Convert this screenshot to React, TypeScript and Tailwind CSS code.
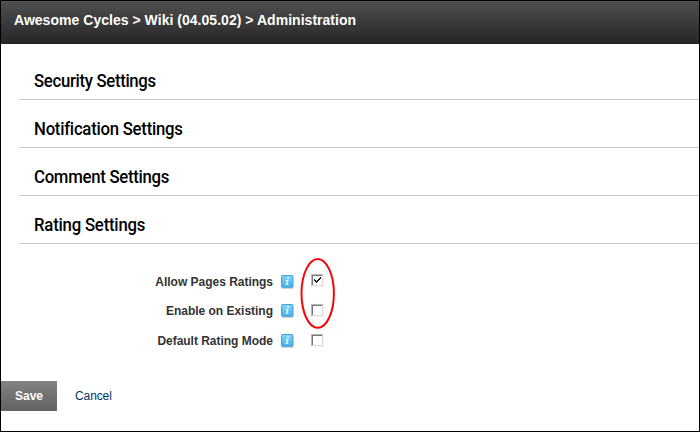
const sections = [
  { title: 'Security Settings', spacing: 'tracking-[-0.34px]' },
  { title: 'Notification Settings', spacing: 'tracking-[-0.27px]' },
  { title: 'Comment Settings', spacing: 'tracking-[-0.3px]' },
  { title: 'Rating Settings', spacing: 'tracking-[-0.22px]' },
];

function InfoIcon() {
  return (
    <svg width="14" height="15" viewBox="0 0 14 15" className="block shrink-0">
      <defs>
        <linearGradient id="info-blue" x1="0" y1="0" x2="0" y2="1">
          <stop offset="0" stopColor="#8bd5f5" />
          <stop offset="0.5" stopColor="#62c2ee" />
          <stop offset="1" stopColor="#43b2e6" />
        </linearGradient>
      </defs>
      <rect x="0.6" y="2" width="12" height="12" rx="1" fill="#d3d3d3" />
      <rect x="0.5" y="0.5" width="11.4" height="11.8" rx="0.8" fill="url(#info-blue)" stroke="#43a5d6" />
      <path d="M6.4 2.6h1.7l-.4 1.4H6zM4.9 5h2.7L6.6 8.8h1l-.3 1H4.3l.3-1h.5L5.9 6H4.6z" fill="#e6f8ff" />
    </svg>
  );
}

function CheckBox({ checked }: { checked?: boolean }) {
  return (
    <svg width="13" height="13" viewBox="0 0 13 13" shapeRendering="crispEdges" className="block shrink-0">
      <rect width="13" height="13" fill="#f4f2ee" />
      <path d="M0 0h12v1H1v11H0z" fill="#b9b7ae" />
      <path d="M1 1h10v1H2v9H1z" fill="#77757e" />
      <rect x="2" y="2" width="9" height="9" fill="#fff" />
      <path d="M11 1h1v11H1v-1h10z" fill="#dedadd" />
      {checked && <path d="M3 5h1v1h1v1h1V6h1V5h1V4h1V3h1v2H9v1H8v1H7v1H6v1H5V8H4V7H3z" fill="#111" />}
    </svg>
  );
}

function SettingRow({ label, checked, height }: { label: string; checked?: boolean; height: string }) {
  return (
    <div className={`flex items-start ${height}`}>
      <span className="w-[254px] whitespace-nowrap text-right text-[12px] font-bold leading-[14px] tracking-[-0.02px] text-[#333]">{label}</span>
      <span className="ml-[8px]"><InfoIcon /></span>
      <span className={checked ? '-mt-px ml-[16px]' : 'ml-[16px]'}><CheckBox checked={checked} /></span>
    </div>
  );
}

export default function App() {
  return (
    <div className="relative flex h-[432px] w-[700px] flex-col overflow-hidden border border-black bg-white font-['Liberation_Sans',Arial,sans-serif]">
      <header className="flex h-[43px] shrink-0 items-center bg-linear-to-b from-[#505050] to-[#262626] pl-[13px] pb-[5px]">
        <h1 className="whitespace-nowrap text-[14px] font-bold leading-[16px] tracking-[0.03px] text-white">
          Awesome Cycles &gt; Wiki (04.05.02) &gt; Administration
        </h1>
      </header>
      <main className="pt-[8px]">
        {sections.map((s) => (
          <div key={s.title} className="ml-[18px] flex h-[48px] items-end border-b border-[#c8c8c8] pb-[7px] pl-[14.5px]">
            <h2 className={`origin-left scale-x-93 whitespace-nowrap font-['Roboto',sans-serif] text-[18px] font-medium leading-[22px] text-black ${s.spacing}`}>{s.title}</h2>
          </div>
        ))}
        <div className="flex flex-col pl-[18px] pt-[31px]">
          <SettingRow label="Allow Pages Ratings" checked height="h-[29px]" />
          <SettingRow label="Enable on Existing" height="h-[30px]" />
          <SettingRow label="Default Rating Mode" height="h-[16px]" />
        </div>
        <div className="mt-[31px] flex items-center">
          <button className="h-[30px] w-[56px] bg-linear-to-b from-[#838383] to-[#626262] text-[12px] font-bold text-white">Save</button>
          <a className="ml-[18px] text-[12px] tracking-[-0.1px] text-[#003366]">Cancel</a>
        </div>
      </main>
      <svg className="absolute left-[298px] top-[255px]" width="38" height="76" viewBox="0 0 38 76">
        <ellipse cx="18.7" cy="37.4" rx="16.2" ry="34.4" fill="none" stroke="#f5050a" strokeWidth="2" />
      </svg>
    </div>
  );
}
